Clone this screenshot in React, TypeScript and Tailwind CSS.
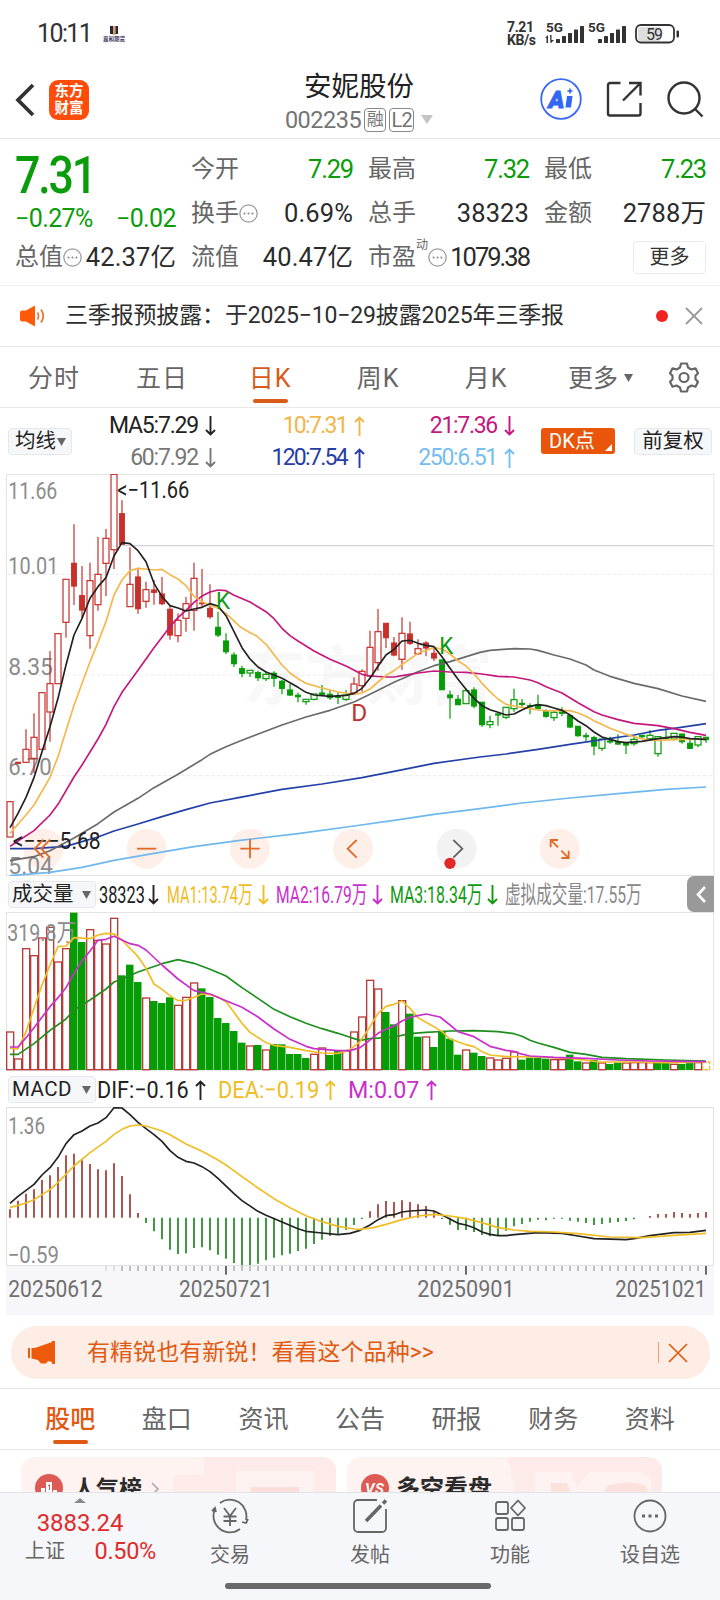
import type { ReactNode } from 'react';

type Bar = [kind: string, top: number, bottom: number, high: number, low: number];

// Chart coordinates use a grid of three units per pixel, one candle every 24 units
const STEP = 24;
const cx = (i: number) => 30 + i * STEP;

const RED = '#c9302c';
const GREEN = '#059c05';

// R / G are hollow bodies, r / g are filled ones
const candles: Bar[] = [
  ['R', 1010, 1116, 1010, 1116], ['r', 892, 895, 892, 895], ['R', 853, 892, 793, 892], ['R', 817, 880, 745, 925],
  ['R', 683, 853, 683, 853], ['R', 656, 741, 558, 830], ['R', 506, 656, 506, 656], ['R', 343, 472, 343, 518],
  ['r', 295, 363, 178, 420], ['r', 392, 435, 303, 460], ['R', 347, 512, 293, 551], ['R', 328, 419, 216, 437],
  ['R', 220, 295, 192, 393], ['R', 28, 254, 28, 312], ['r', 146, 238, 106, 238], ['R', 358, 425, 247, 425],
  ['r', 336, 431, 308, 446], ['R', 374, 409, 350, 428], ['r', 375, 382, 345, 419], ['r', 387, 416, 336, 420],
  ['r', 433, 510, 420, 524], ['R', 466, 512, 445, 532], ['R', 416, 460, 396, 500], ['R', 340, 436, 293, 497],
  ['r', 414, 416, 312, 425], ['r', 430, 455, 358, 461], ['g', 487, 510, 440, 516], ['g', 528, 560, 505, 567],
  ['g', 570, 596, 562, 606], ['g', 611, 625, 602, 637], ['G', 616, 624, 616, 636], ['g', 623, 638, 617, 648],
  ['G', 628, 641, 618, 648], ['g', 625, 640, 619, 665], ['g', 649, 670, 645, 688], ['g', 675, 690, 657, 693],
  ['g', 691, 695, 683, 712], ['G', 703, 710, 703, 719], ['G', 687, 703, 687, 706], ['g', 684, 689, 660, 690],
  ['g', 688, 698, 675, 705], ['g', 693, 697, 683, 717], ['G', 690, 703, 675, 708], ['R', 657, 684, 637, 684],
  ['R', 619, 662, 613, 680], ['R', 547, 633, 497, 640], ['R', 500, 593, 432, 617], ['r', 475, 518, 475, 549],
  ['r', 534, 570, 516, 574], ['R', 505, 583, 457, 614], ['r', 507, 535, 470, 540], ['R', 551, 566, 523, 570],
  ['r', 534, 549, 529, 574], ['r', 565, 579, 550, 588], ['g', 585, 674, 585, 674], ['g', 690, 698, 677, 761],
  ['g', 703, 719, 690, 719], ['G', 677, 716, 670, 716], ['g', 675, 723, 667, 730], ['g', 712, 779, 712, 785],
  ['G', 770, 779, 752, 790], ['g', 747, 750, 745, 782], ['G', 727, 757, 727, 763], ['G', 704, 731, 671, 740],
  ['g', 715, 718, 702, 725], ['g', 722, 725, 715, 748], ['g', 720, 730, 689, 735], ['g', 738, 754, 733, 758],
  ['G', 742, 758, 738, 768], ['g', 741, 745, 727, 754], ['g', 752, 786, 752, 790], ['g', 784, 812, 784, 815],
  ['g', 812, 815, 803, 829], ['g', 818, 843, 812, 871], ['G', 822, 850, 822, 858], ['g', 828, 831, 815, 836],
  ['g', 833, 837, 808, 840], ['g', 833, 840, 833, 867], ['G', 823, 836, 813, 842], ['g', 811, 815, 811, 820],
  ['G', 811, 821, 795, 821], ['G', 815, 866, 815, 875], ['g', 818, 821, 790, 821], ['G', 805, 822, 805, 827],
  ['g', 807, 830, 807, 836], ['g', 835, 850, 823, 850], ['G', 815, 840, 815, 847], ['g', 817, 824, 817, 833],
];

const priceLines = [
  { color: '#6fb8ee', pts: '30,1232 78,1228 150,1222 246,1207 342,1186 462,1165 582,1145 720,1126 894,1106 1062,1083 1182,1066 1302,1048 1440,1031 1566,1014 1710,999 1854,986 1998,973 2118,966' },
  { color: '#2440a8', pts: '30,1151 102,1151 198,1144 246,1130 294,1116 342,1098 414,1077 486,1055 558,1034 630,1014 720,997 846,973 966,957 1086,938 1182,919 1302,895 1440,876 1518,867 1614,853 1710,838 1806,824 1902,810 1974,796 2022,790 2118,776' },
  { color: '#6a6a6a', pts: '30,1187 102,1175 150,1157 222,1119 294,1076 342,1041 414,1000 462,968 534,928 606,884 630,868 678,845 720,828 846,780 918,756 990,736 1062,711 1110,688 1182,652 1254,620 1302,602 1350,590 1440,562 1470,556 1542,551 1590,552 1614,556 1662,570 1710,582 1758,600 1782,615 1830,634 1902,655 1974,671 2046,693 2118,709' },
  { color: '#c4187d', pts: '30,1144 54,1128 102,1097 150,1050 174,1018 222,936 246,900 294,822 318,778 342,725 366,682 414,616 462,548 510,485 534,458 558,436 582,412 606,393 630,381 654,375 678,377 702,391 750,411 798,440 822,461 846,490 870,512 894,528 942,558 990,583 1038,603 1086,628 1110,633 1158,636 1182,636 1206,632 1254,624 1302,618 1350,621 1398,622 1446,627 1494,634 1542,636 1590,645 1614,653 1638,665 1686,684 1734,713 1782,740 1806,750 1854,764 1902,775 1974,782 2022,791 2070,802 2118,811' },
  { color: '#f5b84c', pts: '30,1105 78,1050 102,1020 150,937 174,875 198,797 222,721 270,590 294,532 318,470 342,390 366,345 390,317 414,310 462,315 486,313 510,329 534,342 558,362 582,394 606,410 654,430 678,445 720,485 745,500 770,513 798,538 846,600 870,624 894,641 918,655 966,669 1014,681 1062,688 1086,684 1110,672 1134,651 1158,631 1182,617 1206,599 1254,565 1278,556 1302,548 1326,552 1350,567 1374,588 1398,603 1425,630 1446,655 1470,680 1494,702 1518,718 1542,723 1590,731 1638,738 1686,736 1710,737 1734,744 1758,754 1782,767 1830,790 1878,808 1926,822 1974,826 2022,824 2118,822' },
  { color: '#222222', pts: '30,1088 54,1045 78,997 102,938 126,860 150,785 174,700 198,600 222,510 246,460 270,400 294,365 318,338 342,273 366,233 390,236 414,257 438,290 462,355 486,395 510,422 534,429 558,438 582,432 606,427 630,416 654,423 678,452 702,500 726,548 750,582 774,606 798,621 822,630 846,640 870,653 894,667 918,682 942,690 990,694 1038,691 1062,685 1086,670 1110,640 1134,604 1158,570 1182,553 1206,528 1230,526 1254,535 1278,541 1302,545 1326,575 1350,610 1374,643 1398,673 1422,700 1446,722 1470,734 1494,742 1518,750 1542,747 1566,735 1590,724 1614,719 1638,722 1662,729 1686,736 1710,750 1734,768 1758,782 1782,801 1806,816 1830,823 1854,830 1878,833 1926,829 1974,821 2022,815 2046,816 2070,821 2118,823' },
];

const volumeKinds = 'RRRRRRRRggRRRRgggRgggRRRggggggRgRgggggRRggRRRRRggRggRggggRggRRRRggggRRggRgRggRRRRggRggRY';
const volumeTops = [
  470, 551, 220, 241, 188, 156, 260, 220, 113, 201, 163, 195, 206, 129, 301, 269, 321, 368, 378, 384, 367, 390,
  366, 323, 340, 366, 429, 444, 468, 503, 512, 510, 524, 507, 508, 537, 537, 549, 537, 518, 540, 528, 527, 470,
  425, 315, 341, 411, 448, 376, 416, 485, 485, 516, 470, 491, 539, 524, 533, 543, 548, 554, 549, 530, 554, 548,
  548, 551, 553, 553, 539, 559, 563, 555, 563, 567, 563, 563, 562, 562, 562, 561, 562, 567, 567, 563, 562, 560,
];

const volumeLines = [
  { color: '#1d8f1d', pts: '30,538 54,538 102,506 150,466 198,432 222,405 270,375 318,342 342,321 366,312 414,291 486,266 534,254 582,265 630,283 678,303 726,338 774,370 822,403 870,425 918,445 966,461 1014,475 1050,487 1080,496 1110,491 1182,486 1230,476 1278,472 1350,468 1422,467 1494,470 1542,476 1566,484 1590,496 1614,504 1662,517 1710,532 1758,538 1806,547 1878,551 1998,555 2118,558' },
  { color: '#efbd25', pts: '30,520 54,522 78,470 102,400 126,330 150,270 174,215 198,213 222,188 270,191 294,180 318,175 342,177 366,195 414,245 438,280 462,327 486,343 510,362 534,377 558,376 582,367 606,357 630,359 654,366 678,380 702,412 726,445 750,472 798,503 822,511 870,517 918,527 966,534 1014,535 1050,524 1080,500 1110,455 1134,415 1158,394 1182,388 1206,378 1230,400 1254,428 1302,455 1326,470 1350,492 1374,500 1398,509 1422,515 1446,530 1470,540 1518,545 1614,546 1710,550 1800,561 1902,561 1998,563 2070,562 2118,560' },
  { color: '#c930cb', pts: '30,516 54,516 78,488 102,458 150,395 174,368 198,338 222,295 246,258 270,228 294,196 318,193 342,184 390,206 414,211 438,225 486,270 534,312 582,347 630,357 678,377 726,397 774,426 822,462 870,493 918,514 942,521 1014,527 1050,527 1080,518 1104,500 1134,475 1158,463 1182,453 1206,438 1230,427 1254,422 1278,417 1320,426 1350,450 1374,470 1422,485 1470,514 1518,526 1542,529 1560,536 1590,543 1662,547 1758,550 1854,555 1950,558 2046,559 2118,560' },
];

const macdEnds = [
  403, 377, 356, 343, 315, 301, 276, 241, 236, 256, 267, 283, 286, 265, 303, 358, 414, 444, 469, 493, 524, 537,
  535, 519, 517, 526, 539, 551, 564, 571, 570, 566, 556, 548, 541, 536, 528, 521, 507, 494, 483, 476, 464, 450,
  432, 409, 388, 378, 381, 376, 381, 388, 393, 409, 432, 449, 465, 465, 471, 480, 484, 480, 467, 454, 447, 440,
  434, 436, 431, 431, 437, 440, 444, 450, 447, 443, 441, 438, 433, 428, 423, 417, 417, 411, 414, 417, 414, 411,
];

const macdLines = [
  { color: '#222222', pts: '30,385 54,364 102,328 126,300 150,278 174,247 198,206 222,179 246,168 270,153 294,144 318,128 342,98 366,99 390,119 414,142 438,161 462,179 486,199 510,227 534,247 558,259 582,264 606,275 630,290 654,310 702,356 726,377 774,409 798,421 846,441 894,461 918,469 966,474 1014,479 1050,475 1080,466 1110,450 1134,434 1158,422 1182,419 1206,411 1230,408 1278,405 1302,408 1326,420 1350,432 1374,445 1398,450 1422,458 1446,471 1470,478 1494,482 1518,482 1542,479 1614,473 1686,475 1734,483 1782,491 1878,494 1902,491 1950,482 2022,473 2070,472 2118,466' },
  { color: '#efbd25', pts: '30,397 54,391 78,384 102,374 150,344 174,322 222,273 270,233 318,199 342,178 366,163 390,153 414,150 438,153 486,168 510,179 558,207 606,229 654,255 678,270 726,305 774,339 822,371 870,398 918,422 966,440 1014,454 1062,462 1080,463 1120,458 1158,448 1206,434 1254,423 1302,418 1350,423 1398,431 1446,443 1494,458 1542,465 1590,469 1662,471 1734,476 1830,486 1926,488 2022,481 2118,475' },
];

function Line({ pts, color }: { pts: string; color: string }) {
  return <polyline points={pts} fill="none" stroke={color} strokeWidth="5" strokeLinejoin="round" />;
}

function Label({ x, y, w, fill = '#8c8c8c', children }: { x: number; y: number; w: number; fill?: string; children: string }) {
  return (
    <text x={x} y={y} textLength={w} lengthAdjust="spacingAndGlyphs" fontSize="70" fill={fill}>
      {children}
    </text>
  );
}

function StatusBar() {
  const bars = [4, 7, 10, 13.5, 17];
  return (
    <div className="flex h-[68px] shrink-0 items-center pl-[37px] text-[#333]">
      <span className="w-[66px] text-[25px] tracking-[-1.600px]">10:11</span>
      <svg className="h-[20px] w-[22px]" viewBox="0 0 22 20">
        <rect x="7" y="2" width="3" height="8" fill="#2d2438" />
        <rect x="10" y="2" width="2.500" height="9" fill="#d6a266" />
        <rect x="12.500" y="2" width="2.500" height="8" fill="#2d2438" />
        <text x="0" y="17" fontSize="5.500" fontWeight="700" fill="#3c3357" textLength="22">
          嘉和期货
        </text>
      </svg>
      <div className="ml-[382px] w-[38px] text-[14px] leading-[13px] font-bold tracking-[-0.400px]">
        <div>7.21</div>
        <div>KB/s</div>
      </div>
      <svg className="h-[24px] w-[84px] overflow-visible" viewBox="0 0 84 24">
        <g fill="#333">
          <text x="1" y="9.500" fontSize="13.500" fontWeight="700" textLength="17">
            5G
          </text>
          <text x="43" y="9.500" fontSize="13.500" fontWeight="700" textLength="17">
            5G
          </text>
          <path d="M0 16l3-3v8H1.500v-5zM5 13h1.500v5H9l-3.500 3.500z" />
          {bars.map((h, i) => (
            <rect key={i} x={11 + i * 6} y={21 - h} width="4" height={h} rx="0.600" />
          ))}
          {bars.map((h, i) => (
            <rect key={i} x={53 + i * 6} y={21 - h} width="4" height={h} rx="0.600" />
          ))}
        </g>
      </svg>
      <svg className="ml-[6px] h-[20px] w-[46px]" viewBox="0 0 46 20">
        <rect x="3" y="3" width="23" height="14" rx="3" fill="#dedede" />
        <rect x="1" y="1" width="38" height="17.500" rx="5" fill="none" stroke="#333" strokeWidth="1.800" />
        <rect x="41.500" y="6.500" width="2.500" height="7" rx="1" fill="#333" />
        <text x="11" y="15.500" fontSize="16" fill="#333" textLength="17">
          59
        </text>
      </svg>
    </div>
  );
}

function Header() {
  return (
    <div className="flex h-[71px] shrink-0 items-center border-b border-[#e4e4e4] pl-[15px]">
      <div className="flex w-[269px] items-center gap-[14px] pb-[7px]">
        <svg className="h-[34px] w-[20px]" viewBox="0 0 20 34" fill="none" stroke="#333" strokeWidth="3.800">
          <path d="M18 2L3 17l15 15" />
        </svg>
        <div className="flex size-[40px] flex-col items-center justify-center rounded-[9px] bg-[#ff4c0a] text-[14.500px] leading-[17px] font-bold text-white">
          <div>东方</div>
          <div>财富</div>
        </div>
      </div>
      <div className="flex w-[150px] flex-col items-center pb-[2px]">
        <div className="text-[27.500px] leading-[35px] whitespace-nowrap text-[#222]">安妮股份</div>
        <div className="flex items-center gap-[3px] text-[#757575]">
          <span className="text-[23.500px] leading-[32px] tracking-[-0.500px]">002235</span>
          <span className="flex h-[24px] w-[22px] items-center justify-center rounded-[4px] border border-[#888] text-[17px]">融</span>
          <span className="flex h-[24px] w-[25px] items-center justify-center rounded-[4px] border border-[#888] text-[20px] tracking-[-1px]">L2</span>
          <svg className="ml-[4px] h-[9px] w-[12px]" viewBox="0 0 12 9">
            <path d="M0 0h12L6 9z" fill="#c4c4c4" />
          </svg>
        </div>
      </div>
      <div className="ml-[106px] flex items-center gap-[24px] pb-[8px]">
        <svg className="size-[42px]" viewBox="0 0 42 42">
          <circle cx="21" cy="21" r="19.800" fill="none" stroke="#3b68f0" strokeWidth="1.800" />
          <text x="8.500" y="29.500" fontSize="24" fontWeight="900" fontStyle="italic" fill="#3366f5" stroke="#3366f5" strokeWidth="1">
            A
          </text>
          <path d="M27 18h5.500l-1.500 11.500h-5.500z" fill="#3366f5" />
          <path d="M30 9.500l1 2.500 2.500 1-2.500 1-1 2.500-1-2.500-2.500-1 2.500-1z" fill="#3366f5" />
        </svg>
        <svg className="size-[36px]" viewBox="0 0 36 36" fill="none" stroke="#333" strokeWidth="2.400">
          <path d="M14.500 2H4a2 2 0 0 0-2 2v28.500a2 2 0 0 0 2 2h28.500a2 2 0 0 0 2-2V22" />
          <path d="M23 2h11.500v12.500M34 2.500L17 19.500" />
        </svg>
        <svg className="size-[38px]" viewBox="0 0 38 38" fill="none" stroke="#333" strokeWidth="2.400">
          <circle cx="18" cy="18" r="15.500" />
          <path d="M28.500 28.500l8 8" />
        </svg>
      </div>
    </div>
  );
}

function Dots() {
  return (
    <svg className="size-[19px] shrink-0" viewBox="0 0 18 18">
      <circle cx="9" cy="9" r="8.200" fill="none" stroke="#9a9a9a" strokeWidth="1.200" />
      <circle cx="5.300" cy="9" r="1" fill="#8a8a8a" />
      <circle cx="9" cy="9" r="1" fill="#8a8a8a" />
      <circle cx="12.700" cy="9" r="1" fill="#8a8a8a" />
    </svg>
  );
}

function Field({ label, value, green, hint, sup }: { label: string; value: string; green?: boolean; hint?: boolean; sup?: string }) {
  let tracking = 'tracking-[0.100px]';
  if (green) tracking = 'tracking-[-1.200px]';
  else if (sup) tracking = 'tracking-[-2px]';
  return (
    <div className="flex items-center justify-between whitespace-nowrap">
      <div className="flex items-center text-[24px] text-[#666]">
        {label}
        {sup && <span className="-mt-[24px] text-[12px]">{sup}</span>}
        {hint && <Dots />}
      </div>
      <div className={`text-[25.500px] ${tracking} ${green ? 'text-[#0a9c0a]' : 'text-[#2b2b2b]'}`}>{value}</div>
    </div>
  );
}

function Quote() {
  return (
    <div className="flex h-[147px] shrink-0 gap-[15px] border-b border-[#f0f0f0] pt-[8px] pl-[15px]">
      <div className="w-[161px]">
        <div className="h-[52px] origin-left scale-x-[0.860] text-[52px] leading-[57px] font-medium tracking-[-2.500px] text-[#0a9c0a]">7.31</div>
        <div className="flex h-[40px] items-center justify-between text-[25px] tracking-[-0.600px] text-[#0a9c0a]">
          <span>−0.27%</span>
          <span>−0.02</span>
        </div>
        <div className="-mt-[1px]">
          <Field label="总值" value="42.37亿" hint />
        </div>
      </div>
      <div className="grid h-[132px] grid-cols-[162px_161px_162px] grid-rows-3 items-center gap-x-[15px]">
        <Field label="今开" value="7.29" green />
        <Field label="最高" value="7.32" green />
        <Field label="最低" value="7.23" green />
        <Field label="换手" value="0.69%" hint />
        <Field label="总手" value="38323" />
        <Field label="金额" value="2788万" />
        <Field label="流值" value="40.47亿" />
        <Field label="市盈" value="1079.38" hint sup="动" />
        <div className="ml-auto flex h-[33px] w-[73px] items-center justify-center rounded-[4px] border border-[#ececec] text-[20px] text-[#333]">更多</div>
      </div>
    </div>
  );
}

function Notice() {
  return (
    <div className="flex h-[61px] shrink-0 items-center border-b border-[#e8e8e8] pl-[20px] text-[#2e2e2e]">
      <svg className="h-[22px] w-[26px]" viewBox="0 0 26 22">
        <path d="M0 7.500a2 2 0 0 1 2-2h4L15 .5v21L6 16.500H2a2 2 0 0 1-2-2z" fill="#ff5a0a" />
        <path d="M17.500 7.500q2 3.500 0 7M21 4.500q4.500 6.500 0 13" fill="none" stroke="#f2763a" strokeWidth="1.800" />
      </svg>
      <span className="ml-[19px] w-[591px] pt-[1px] text-[23px] tracking-[-0.160px] whitespace-nowrap">三季报预披露：于2025−10−29披露2025年三季报</span>
      <span className="size-[12px] rounded-full bg-[#f02222]" />
      <svg className="ml-[17px] size-[18px]" viewBox="0 0 18 18" stroke="#999" strokeWidth="1.800">
        <path d="M1 1l16 16M17 1L1 17" />
      </svg>
    </div>
  );
}

function PeriodTabs() {
  const tabs = ['分时', '五日', '日K', '周K', '月K'];
  return (
    <div className="flex h-[61px] shrink-0 items-stretch border-b border-[#e8e8e8] text-[25px] text-[#666]">
      {tabs.map((tab) => (
        <div
          key={tab}
          className={`relative flex w-[108px] items-center justify-center pt-[3px] tracking-[1px] ${tab === '日K' ? 'text-[#d95a1a]' : ''}`}
        >
          {tab}
          {tab === '日K' && <span className="absolute bottom-[4px] h-[4px] w-[35px] rounded-full bg-[#d95a1a]" />}
        </div>
      ))}
      <div className="flex w-[126px] items-center pt-[3px] pl-[28px]">
        更多
        <svg className="-mt-[2px] ml-[6px] h-[8px] w-[9px]" viewBox="0 0 9 8">
          <path d="M0 0h9L4.500 8z" fill="#666" />
        </svg>
      </div>
      <svg className="ml-[3px] h-[31px] w-[30px] self-center" viewBox="0 0 30 31" fill="none" stroke="#666" strokeWidth="2.200" strokeLinejoin="round">
        <path d="M12 1.500h6l1 4 3.500 2 4-1.200 2.500 5-2.500 2.500v3.400l2.500 2.500-2.500 5-4-1.200-3.500 2-1 4h-6l-1-4-3.500-2-4 1.200-2.500-5 2.500-2.500v-3.400L1 11.300l2.500-5 4 1.200 3.500-2z" />
        <circle cx="15" cy="15.500" r="4.500" />
      </svg>
    </div>
  );
}

function Arrow({ up }: { up?: boolean }) {
  return (
    <svg className="h-[20px] w-[11px] shrink-0" viewBox="0 0 11 20" fill="none" stroke="currentColor" strokeWidth="1.900">
      <path d={up ? 'M5.500 20V1.500M1 6l4.500-4.500L10 6' : 'M5.500 0v18.500M1 14l4.500 4.500L10 14'} />
    </svg>
  );
}

function Chip({ className, children }: { className: string; children: ReactNode }) {
  return (
    <div className={`flex h-[27px] shrink-0 items-center rounded-[4px] border border-[#e6e8ec] bg-[#f6f7f9] pt-[1px] text-[20.500px] text-[#222] ${className}`}>
      {children}
    </div>
  );
}

function Caret() {
  return (
    <svg className="h-[8px] w-[9px]" viewBox="0 0 9 8">
      <path d="M0 0h9L4.500 8z" fill="#666" />
    </svg>
  );
}

function MaLegend() {
  const columns = [
    { width: 'w-[144px]', tracking: 'tracking-[-1.200px]', rows: [['MA5:7.29', 'text-[#222]', ''], ['60:7.92', 'text-[#777]', '']] },
    { width: 'w-[149px]', tracking: 'tracking-[-1.700px]', rows: [['10:7.31', 'text-[#f2b64c]', 'up'], ['120:7.54', 'text-[#263ea5]', 'up']] },
    { width: 'w-[150px]', tracking: 'tracking-[-1.300px]', rows: [['21:7.36', 'text-[#c4187d]', ''], ['250:6.51', 'text-[#76bdf0]', 'up']] },
  ];
  return (
    <div className="flex h-[66px] shrink-0 items-center pl-[8px]">
      <Chip className="w-[64px] justify-between pr-[5px] pl-[6px]">
        均线
        <Caret />
      </Chip>
      {columns.map(({ width, tracking, rows }) => (
        <div key={width} className={`flex flex-col pt-[2px] ${width} ${tracking}`}>
          {rows.map(([text, color, dir]) => (
            <div key={text} className={`flex h-[32px] items-center justify-end gap-[7px] text-[23px] ${color}`}>
              {text}
              <Arrow up={dir === 'up'} />
            </div>
          ))}
        </div>
      ))}
      <div className="ml-[26px] flex h-[26px] w-[74px] items-center rounded-[3px] bg-[#e9560b] pl-[8px] text-[20px] text-white">
        DK点
        <svg className="mt-[12px] mr-[3px] ml-auto size-[7px]" viewBox="0 0 7 7">
          <path d="M7 0v7H0z" fill="#fff" />
        </svg>
      </div>
      <Chip className="ml-[19px] w-[78px] justify-center">前复权</Chip>
    </div>
  );
}

function PriceChart() {
  return (
    <svg className="h-[402px] w-[720px] shrink-0" viewBox="0 27 2160 1206">
      <text x="728" y="702" fontSize="190" fontWeight="700" fill="#f8f8f8" textLength="750">
        东方财富
      </text>
      {[328, 630, 932].map((y) => (
        <path key={y} d={`M20 ${y}H2140`} stroke="#ececec" strokeWidth="3" strokeDasharray="12 6" />
      ))}
      <path d="M366 242H2140" stroke="#d3d3d9" strokeWidth="4" />
      <rect x="19.500" y="28.500" width="2122" height="1203" fill="none" stroke="#e3e3e3" strokeWidth="3" />
      {[130, 440, 750, 1059, 1370, 1679].map((x) => (
        <circle key={x} cx={x} cy="1151" r="60" fill={x === 1370 ? '#f2f2f2' : '#fef0e9'} />
      ))}
      <Label x={25} y={102} w={147}>11.66</Label>
      <Label x={25} y={328} w={150}>10.01</Label>
      <Label x={25} y={630} w={134}>8.35</Label>
      <Label x={25} y={931} w={130}>6.70</Label>
      <Label x={25} y={1227} w={134}>5.04</Label>
      {candles.map(([kind, top, bottom, high, low], i) => {
        const color = kind.toLowerCase() === 'r' ? RED : GREEN;
        const hollow = kind === 'R' || kind === 'G';
        return (
          <g key={i} stroke={color} strokeWidth="3.600" fill={hollow ? 'none' : color}>
            {high < top && <path d={`M${cx(i)} ${high}V${top}`} />}
            {low > bottom && <path d={`M${cx(i)} ${bottom}V${low}`} />}
            <rect x={cx(i) - (hollow ? 9 : 7)} y={top} width={hollow ? 18 : 14} height={bottom - top} />
          </g>
        );
      })}
      {priceLines.map((line) => (
        <Line key={line.color} {...line} />
      ))}
      <Label x={352} y={98} w={216} fill="#222">{'<−11.66'}</Label>
      <Label x={38} y={1152} w={264} fill="#222">{'<−−−5.68'}</Label>
      <Label x={648} y={432} w={42} fill="#109a10">K</Label>
      <Label x={1318} y={568} w={42} fill="#109a10">K</Label>
      <Label x={1054} y={768} w={48} fill="#bf3030">D</Label>
      <g fill="none" stroke="#e26a24" strokeWidth="5.500">
        <path d="M130 1124l-26 27 26 27M150 1124l-26 27 26 27" />
        <path d="M411 1151h58" />
        <path d="M721 1151h58M750 1122v58" />
        <path d="M1070 1125l-27 26 27 27" />
        <path d="M1652 1147v-22h22M1654 1127l20 20M1706 1157v22h-22M1704 1177l-20-20" />
      </g>
      <path d="M1360 1125l27 26-27 27" fill="none" stroke="#666" strokeWidth="5.500" />
      <circle cx="1350" cy="1195" r="17" fill="#e02a2a" />
    </svg>
  );
}

function Stretch({ width, scale, color, up, arrow = true, children }: { width: string; scale: string; color: string; up?: boolean; arrow?: boolean; children: string }) {
  return (
    <div className={`flex shrink-0 items-center justify-between pt-[1px] whitespace-nowrap ${width} ${color}`}>
      <span className={`w-0 origin-left text-[24px] ${scale}`}>{children}</span>
      {arrow && <Arrow up={up} />}
    </div>
  );
}

function VolumeLegend() {
  return (
    <div className="flex h-[36px] shrink-0 items-center pl-[8px]">
      <Chip className="w-[88px] justify-between pr-[4px] pl-[3px]">
        成交量
        <Caret />
      </Chip>
      <Stretch width="ml-[3px] w-[60px]" scale="scale-x-[0.680]" color="text-[#222]">38323</Stretch>
      <Stretch width="ml-[8px] w-[102px]" scale="scale-x-[0.610]" color="text-[#efbd25]">MA1:13.74万</Stretch>
      <Stretch width="ml-[7px] w-[107px]" scale="scale-x-[0.650]" color="text-[#c930cb]">MA2:16.79万</Stretch>
      <Stretch width="ml-[7px] w-[108px]" scale="scale-x-[0.660]" color="text-[#109a10]">MA3:18.34万</Stretch>
      <Stretch width="ml-[7px] w-[137px]" scale="scale-x-[0.650]" color="text-[#888]" arrow={false}>虚拟成交量:17.55万</Stretch>
      <div className="ml-auto mr-[6px] flex h-[36px] w-[27px] items-center justify-center rounded-l-[7px] bg-[#999]">
        <svg className="h-[17px] w-[10px]" viewBox="0 0 10 17" fill="none" stroke="#fff" strokeWidth="2.600">
          <path d="M9 1L2 8.500 9 16" />
        </svg>
      </div>
    </div>
  );
}

function VolumeChart() {
  return (
    <svg className="h-[159px] w-[720px] shrink-0" viewBox="0 111 2160 477">
      <rect x="19.500" y="112.500" width="2121" height="473" fill="none" stroke="#e3e3e3" strokeWidth="3" />
      {volumeTops.map((top, i) => {
        const kind = volumeKinds[i];
        if (kind === 'g') {
          return <rect key={i} x={cx(i) - 12} y={top} width="22.500" height={585 - top} fill="#059c05" />;
        }
        return (
          <rect
            key={i}
            x={cx(i) - 10}
            y={top + 1}
            width="21"
            height={583 - top}
            fill="#fff"
            stroke={kind === 'Y' ? '#efbd25' : '#b93b38'}
            strokeWidth="4"
            strokeDasharray={kind === 'Y' ? '12 4' : undefined}
          />
        );
      })}
      <Label x={22} y={198} w={206}>319.8万</Label>
      {volumeLines.map((line) => (
        <Line key={line.color} {...line} />
      ))}
    </svg>
  );
}

function MacdLegend() {
  return (
    <div className="flex h-[36px] shrink-0 items-center pl-[8px]">
      <Chip className="w-[88px] justify-between pr-[4px] pl-[3px]">
        <span className="tracking-[0.400px]">MACD</span>
        <Caret />
      </Chip>
      <Stretch width="ml-[1px] w-[109px]" scale="scale-x-[0.900]" color="text-[#222]" up>DIF:−0.16</Stretch>
      <Stretch width="ml-[12px] w-[118px]" scale="scale-x-[0.910]" color="text-[#efbd25]" up>DEA:−0.19</Stretch>
      <Stretch width="ml-[12px] w-[89px]" scale="scale-x-[0.970]" color="text-[#c930cb]" up>M:0.07</Stretch>
    </div>
  );
}

function MacdChart() {
  const ticks = Array.from({ length: 76 }, (_, k) => k + 12);
  return (
    <svg className="h-[209px] w-[720px] shrink-0" viewBox="0 96 2160 627">
      <rect x="18" y="572" width="2124" height="149" fill="#f7f7fa" />
      <rect x="19.500" y="97.500" width="2121" height="474" fill="none" stroke="#e0e0e0" strokeWidth="3" />
      {macdEnds.map((end, i) => (
        <path key={i} d={`M${cx(i)} 428V${end}`} stroke={end < 428 ? '#a8443f' : '#2f8f2f'} strokeWidth="5.500" />
      ))}
      {macdLines.map((line) => (
        <Line key={line.color} {...line} />
      ))}
      <Label x={25} y={177} w={110}>1.36</Label>
      <Label x={23} y={565} w={154}>−0.59</Label>
      {ticks.map((i) => {
        const major = i === 27 || i === 57 || i === 87;
        return (
          <path
            key={i}
            d={`M${cx(i)} 573V${major ? 599 : 588}`}
            stroke={major ? '#6b6b6b' : '#b5b5b5'}
            strokeWidth={major ? 6 : 5}
            opacity={i < 14 ? 0.4 : 1}
          />
        );
      })}
      <Label x={25} y={665} w={283} fill="#707070">20250612</Label>
      <Label x={537} y={665} w={281} fill="#707070">20250721</Label>
      <Label x={1252} y={665} w={292} fill="#707070">20250901</Label>
      <Label x={1846} y={665} w={272} fill="#707070">20251021</Label>
    </svg>
  );
}

function Banner() {
  return (
    <div className="mr-[10px] ml-[11px] mt-[10px] flex h-[53px] shrink-0 items-center rounded-[26px] bg-[#fdede4] pl-[17px] text-[#e05a14]">
      <svg className="h-[24px] w-[28px]" viewBox="0 0 28 24" fill="#ee5a0c">
        <path d="M0 7h2v10H0zM3.500 7H7L24 1V0h3v23h-3v-2l-4-1-2 2.500h-5L10 19l-6.500-1.500z" />
      </svg>
      <span className="ml-[31px] pt-[2px] text-[23px] tracking-[0.050px] whitespace-nowrap">有精锐也有新锐！看看这个品种&gt;&gt;</span>
      <span className="ml-auto h-[21px] w-px bg-[#eb9c74]" />
      <svg className="mr-[22px] ml-[9px] size-[20px]" viewBox="0 0 20 20" stroke="#e05a14" strokeWidth="1.700">
        <path d="M1 1l18 18M19 1L1 19" />
      </svg>
    </div>
  );
}

function SectionTabs() {
  const tabs = ['股吧', '盘口', '资讯', '公告', '研报', '财务', '资料'];
  return (
    <div className="mt-[9px] flex h-[62px] shrink-0 border-y border-[#e8e8e8] px-[22px] text-[25px] text-[#666]">
      {tabs.map((tab, i) => (
        <div key={tab} className={`relative flex flex-1 items-center justify-center pt-[2px] ${i === 0 ? 'font-medium text-[#e05a14]' : ''}`}>
          {tab}
          {i === 0 && <span className="absolute bottom-[5px] h-[4px] w-[35px] rounded-full bg-[#e05a14]" />}
        </div>
      ))}
    </div>
  );
}

function Cards() {
  return (
    <div className="flex h-[42px] shrink-0 gap-[11px] overflow-hidden pt-[7px] pl-[21px]">
      <div className="relative flex h-[80px] w-[315px] overflow-hidden rounded-[14px] bg-[#fef3f1] pt-[17px] pl-[14px]">
        <svg className="absolute top-0 left-0 h-[36px] w-[315px]" viewBox="0 0 315 36">
          <path d="M183 0h132v36H153V18h30z" fill="#fdebe9" />
          <path d="M215 14h78v22h-78z" fill="#fef2f0" />
          <path d="M230 30h48v6h-48z" fill="#fbdedb" />
        </svg>
        <svg className="relative size-[28px]" viewBox="0 0 28 28">
          <circle cx="14" cy="14" r="14" fill="#de5a54" />
          <path d="M6 14h4v9H6zM11 8h6v15h-6zM18 16h4v7h-4z" fill="#fff" />
          <path d="M13 12l1.500-1.500V16" fill="none" stroke="#de5a54" />
        </svg>
        <span className="relative mt-[2px] ml-[10px] text-[23px] leading-[27px] font-bold text-[#2b2b2b]">人气榜</span>
        <svg className="relative mt-[8px] ml-[9px] h-[14px] w-[9px]" viewBox="0 0 9 14" fill="none" stroke="#aaa" strokeWidth="1.600">
          <path d="M1 1l6 6-6 6" />
        </svg>
      </div>
      <div className="relative flex h-[80px] w-[315px] overflow-hidden rounded-[14px] bg-[#fef3f1] pt-[17px] pl-[14px]">
        <svg className="absolute top-0 left-0 h-[36px] w-[315px]" viewBox="0 0 315 36">
          <path d="M161 0h154v36H168z" fill="#fdebe9" />
          <path d="M188 15h36l6 16 12-16h52l10 8v13H188z" fill="#fef3f1" />
          <path d="M204 26h16l4 10h-20zM262 28q20-5 36 0l4 8h-46z" fill="#fbe2df" />
        </svg>
        <svg className="relative size-[28px]" viewBox="0 0 28 28">
          <circle cx="14" cy="14" r="14" fill="#de5a54" />
          <text x="4" y="19.500" fontSize="15" fontWeight="700" fontStyle="italic" fill="#fff" textLength="19">
            VS
          </text>
        </svg>
        <span className="relative mt-[2px] ml-[7px] text-[24px] leading-[27px] font-bold text-[#2b2b2b]">多空看盘</span>
      </div>
    </div>
  );
}

function NavItem({ label, children }: { label: string; children: ReactNode }) {
  return (
    <div className="flex w-[140px] flex-col items-center pt-[4px] text-[20px] text-[#666]">
      <svg className="size-[38px]" viewBox="0 0 38 38" fill="none" stroke="#666" strokeWidth="1.800">
        {children}
      </svg>
      <span className="mt-[6px] leading-[28px]">{label}</span>
    </div>
  );
}

function BottomNav() {
  return (
    <div className="flex h-[108px] shrink-0 flex-col items-center border-t border-[#e2e3e6] bg-[#f6f7fa]">
      <div className="flex h-[90px] w-full">
        <div className="flex w-[160px] flex-col items-center text-[#de2c2c]">
          <svg className="mt-[5px] h-[5px] w-[12px]" viewBox="0 0 12 5">
            <path d="M6 0l6 5H0z" fill="#8a8a8a" />
          </svg>
          <span className="mt-[6px] text-[24px] leading-[28px] tracking-[-0.100px]">3883.24</span>
          <div className="flex w-full justify-between pr-[4px] pl-[25px] leading-[29px]">
            <span className="text-[20px] text-[#666]">上证</span>
            <span className="text-[23.500px] tracking-[-0.300px]">0.50%</span>
          </div>
        </div>
        <NavItem label="交易">
          <path d="M9 6a16.500 16.500 0 0 1 26 17M29 32A16.500 16.500 0 0 1 4 12M1 14l3-3 1 4M37 22l-2 4-4-1" />
          <path d="M13 11l6 8 6-8M19 19v10M12.500 19.500h13M12.500 24h13" />
        </NavItem>
        <NavItem label="发帖">
          <path d="M26 3H7a4 4 0 0 0-4 4v24a4 4 0 0 0 4 4h24a4 4 0 0 0 4-4V12" />
          <path d="M15 24L30 8.500M32 6.500l3-3" strokeWidth="3.500" />
        </NavItem>
        <NavItem label="功能">
          <rect x="5" y="5" width="12" height="12" rx="2" />
          <rect x="5" y="21" width="12" height="12" rx="2" />
          <rect x="21" y="21" width="12" height="12" rx="2" />
          <path d="M27 3.500l7 7.500-7 7.500-7-7.500z" strokeLinejoin="round" />
        </NavItem>
        <NavItem label="设自选">
          <circle cx="19" cy="19" r="15.500" />
          <path d="M11 19h3M17.500 19h3M24 19h3" strokeWidth="3" />
        </NavItem>
      </div>
      <div className="mr-[4px] h-[6px] w-[266px] rounded-full bg-[#6a6a6a]" />
    </div>
  );
}

export default function App() {
  return (
    <div className="flex h-[1600px] w-[720px] flex-col overflow-hidden bg-white font-[Roboto,'Noto_Sans_CJK_SC',sans-serif]">
      <StatusBar />
      <Header />
      <Quote />
      <Notice />
      <PeriodTabs />
      <MaLegend />
      <PriceChart />
      <VolumeLegend />
      <VolumeChart />
      <MacdLegend />
      <MacdChart />
      <Banner />
      <SectionTabs />
      <Cards />
      <BottomNav />
    </div>
  );
}
